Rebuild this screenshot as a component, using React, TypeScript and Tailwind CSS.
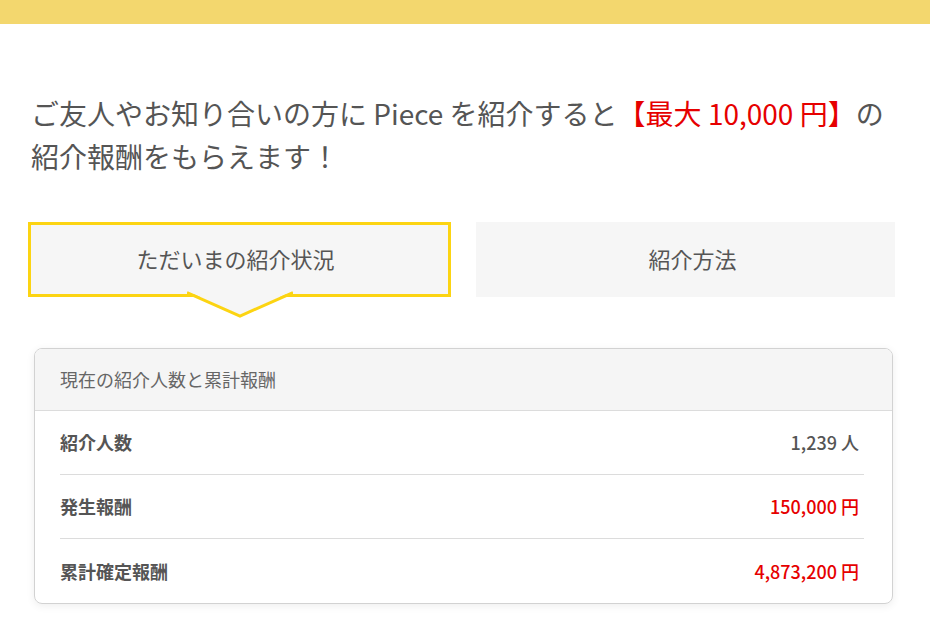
import React from "react";

const rows = [
  { label: "紹介人数", value: "1,239 人", red: false },
  { label: "発生報酬", value: "150,000 円", red: true },
  { label: "累計確定報酬", value: "4,873,200 円", red: true },
];

export default function App() {
  return (
    <div
      className="min-h-[636px] bg-white text-[#555]"
      style={{ fontFamily: '"Noto Sans CJK JP", "Noto Sans", sans-serif' }}
    >
      <div className="h-6 bg-[#f3d76e]" />

      <div className="pl-[28px] pr-[35px]">
        <h1 className="mt-[68px] pl-[3px] text-[28px] font-normal leading-[43px] text-[#555] whitespace-nowrap">
          ご友人やお知り合いの方に Piece を紹介すると
          <span className="text-[#e60000]">【最大 10,000 円】</span>の
          <br />
          紹介報酬をもらえます！
        </h1>

        <div className="mt-[44px] flex gap-[25px]">
          <div className="relative flex h-[75px] w-[423px] items-center justify-center border-[3px] border-[#fcd412] bg-[#f6f6f6] pr-[8px] pb-[2px] text-[22px]">
            ただいまの紹介状況
            <svg
              className="absolute left-1/2 top-full -translate-x-1/2 -mt-[3px]"
              width="106"
              height="28"
              viewBox="0 0 106 28"
            >
              <polygon points="0,0 53,24 106,0" fill="#f6f6f6" />
              <polyline
                points="0,1.5 53,25 106,1.5"
                fill="none"
                stroke="#fcd412"
                strokeWidth="3"
              />
            </svg>
          </div>
          <div className="flex h-[75px] flex-1 items-center justify-center bg-[#f6f6f6] pl-[14px] pb-[2px] text-[22px]">
            紹介方法
          </div>
        </div>

        <div className="ml-[6px] mr-[2px] mt-[51px] overflow-hidden rounded-lg border border-[#d2d2d2] shadow-[0_2px_8px_rgba(0,0,0,0.07)]">
          <div className="flex h-[62px] items-center border-b border-[#dcdcdc] bg-[#f5f5f5] px-[25px] text-[18px] text-[#666]">
            現在の紹介人数と累計報酬
          </div>
          <div className="pl-[25px] pr-[28px]">
            {rows.map((r, i) => (
              <div
                key={r.label}
                className={`flex h-[64px] items-center justify-between ${
                  i < rows.length - 1 ? "border-b border-[#dcdcdc]" : ""
                }`}
              >
                <span className="text-[18px] font-semibold text-[#555]">{r.label}</span>
                <span
                  className={`pr-[5px] text-[18px] font-medium ${
                    r.red ? "text-[#e60000]" : "text-[#555]"
                  }`}
                >
                  {r.value}
                </span>
              </div>
            ))}
          </div>
        </div>
      </div>
    </div>
  );
}
